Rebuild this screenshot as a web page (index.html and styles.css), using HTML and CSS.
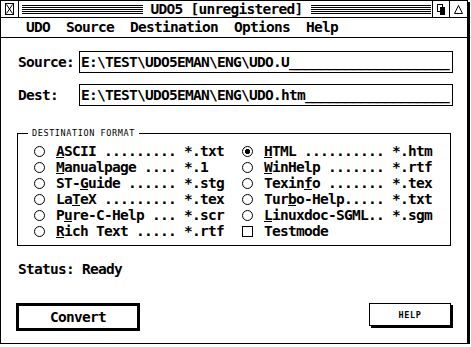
FILE: index.html
```html
<!DOCTYPE html>
<html>
<head>
<meta charset="utf-8">
<link rel="stylesheet" href="styles.css">
</head>
<body>
<div class="window">
  <div class="titlebar">
    <div class="tb-btn close">
      <svg width="9" height="12" viewBox="0 0 9 12"><rect x="0.5" y="0.5" width="8" height="11" fill="none" stroke="#000"/><path d="M1.5 1.5L7.5 10.5M7.5 1.5L1.5 10.5" stroke="#000" fill="none"/></svg>
    </div>
    <div class="drag"><span class="title">UDO5 [unregistered]</span></div>
    <div class="tb-btn full">
      <svg width="8" height="11" viewBox="0 0 8 11"><rect x="0.5" y="0.5" width="5" height="7" fill="none" stroke="#000"/><rect x="3" y="3" width="5" height="8" fill="#000"/></svg>
    </div>
    <div class="tb-btn iconify">
      <svg width="9" height="9" viewBox="0 0 9 9"><path d="M4.5 0.5L8.5 8.5H0.5Z" fill="none" stroke="#000"/></svg>
    </div>
  </div>
  <div class="menubar">
    <span>UDO</span><span>Source</span><span>Destination</span><span>Options</span><span>Help</span>
  </div>
  <div class="content">
    <div class="field">
      <span class="label">Source:</span>
      <div class="input">E:\TEST\UDO5EMAN\ENG\UDO.U<span class="blank">____________________</span></div>
    </div>
    <div class="field">
      <span class="label">Dest:</span>
      <div class="input">E:\TEST\UDO5EMAN\ENG\UDO.htm<span class="blank">__________________</span></div>
    </div>
    <fieldset class="group">
      <legend>DESTINATION FORMAT</legend>
      <div class="grid">
        <div class="opt"><span class="radio"></span><span><u>A</u>SCII ......... *.txt</span></div>
        <div class="opt"><span class="radio"></span><span><u>M</u>anualpage .... *.1</span></div>
        <div class="opt"><span class="radio"></span><span>ST-<u>G</u>uide ...... *.stg</span></div>
        <div class="opt"><span class="radio"></span><span>La<u>T</u>eX ......... *.tex</span></div>
        <div class="opt"><span class="radio"></span><span>P<u>u</u>re-C-Help ... *.scr</span></div>
        <div class="opt"><span class="radio"></span><span><u>R</u>ich Text ..... *.rtf</span></div>
        <div class="opt"><span class="radio on"></span><span><u>H</u>TML .......... *.htm</span></div>
        <div class="opt"><span class="radio"></span><span><u>W</u>inHelp ....... *.rtf</span></div>
        <div class="opt"><span class="radio"></span><span>Texin<u>f</u>o ....... *.tex</span></div>
        <div class="opt"><span class="radio"></span><span>Tur<u>b</u>o-Help..... *.txt</span></div>
        <div class="opt"><span class="radio"></span><span><u>L</u>inuxdoc-SGML.. *.sgm</span></div>
        <div class="opt"><span class="check"></span><span>Testmode</span></div>
      </div>
    </fieldset>
    <div class="status">Status: Ready</div>
    <div class="buttons">
      <button class="btn convert">Convert</button>
      <button class="btn help">HELP</button>
    </div>
  </div>
</div>
</body>
</html>
```
FILE: styles.css
```css
html, body {
  margin: 0;
  background: #fff;
}
body {
  font-family: "DejaVu Sans Mono", "Liberation Mono", monospace;
  font-weight: bold;
  font-size: 14.5px;
  letter-spacing: -0.73px;
  color: #000;
}
.window {
  width: 466px;
  height: 342px;
  border: 1px solid #000;
  box-shadow: 2px 2px 0 #000;
  display: flex;
  flex-direction: column;
}
.titlebar {
  height: 16px;
  border-bottom: 1px solid #000;
  display: flex;
  flex: none;
}
.tb-btn {
  display: flex;
  align-items: center;
  justify-content: center;
}
.tb-btn svg { display: block; }
.close {
  width: 17px;
  border-right: 1px solid #000;
}
.full {
  width: 16px;
  border-left: 1px solid #000;
}
.iconify {
  width: 17px;
  border-left: 1px solid #000;
}
.drag {
  flex: 1;
  padding: 0 1px 0 3px;
  display: flex;
  justify-content: center;
  align-items: center;
  background-image: repeating-linear-gradient(to bottom, #000 0, #000 1px, transparent 1px, transparent 2px);
  background-origin: content-box;
  background-clip: content-box;
  background-size: 100% 9px;
  background-position: 0 4px;
  background-repeat: no-repeat;
}
.title {
  background: #fff;
  padding: 0 8px;
  line-height: 16px;
  white-space: pre;
}
.menubar {
  flex: none;
  height: 19px;
  line-height: 19px;
  border-bottom: 1px solid #000;
  padding-left: 25px;
  display: flex;
  gap: 16px;
}
.content {
  padding: 13px 0 0 16px;
}
.field {
  display: flex;
  align-items: center;
  height: 22px;
}
.field + .field {
  margin-top: 11px;
}
.label {
  width: 61px;
  padding-left: 1px;
}
.input {
  border: 1px solid #000;
  width: 371px;
  height: 20px;
  line-height: 21px;
  padding-left: 1px;
  white-space: pre;
  overflow: hidden;
}
.blank {
  letter-spacing: -0.73px;
}
.group {
  box-sizing: border-box;
  width: 434px;
  margin: 23px 0 0 0;
  border: 1px solid #000;
  padding: 6px 0 6px 16px;
  min-inline-size: 0;
}
.group legend {
  font-family: "DejaVu Sans Mono", monospace;
  font-weight: normal;
  font-size: 8.5px;
  letter-spacing: 0.6px;
  line-height: 8px;
  padding: 0 4px;
  margin-left: -6px;
}
.grid {
  display: grid;
  grid-template-columns: 208px auto;
  grid-template-rows: repeat(6, 16px);
  grid-auto-flow: column;
}
.opt {
  display: flex;
  align-items: center;
  white-space: pre;
  line-height: 16px;
}
.radio {
  width: 11px;
  height: 11px;
  border: 1px solid #000;
  border-radius: 50%;
  box-sizing: border-box;
  margin-right: 11px;
  flex: none;
}
.radio.on {
  background: radial-gradient(circle, #000 0, #000 2.4px, transparent 2.9px);
}
.check {
  width: 11px;
  height: 11px;
  border: 1px solid #000;
  box-sizing: border-box;
  margin-right: 11px;
  flex: none;
}
u {
  text-decoration-thickness: 1px;
  text-underline-offset: 1px;
}
.status {
  margin-top: 15px;
  line-height: 16px;
  padding-left: 1px;
}
.buttons {
  margin-top: 26px;
  margin-left: -1px;
  width: 435px;
  display: flex;
  justify-content: space-between;
  align-items: flex-start;
}
.btn {
  background: #fff;
  color: #000;
  padding: 0;
  box-sizing: border-box;
  font-family: inherit;
  font-weight: bold;
  font-size: 14.5px;
  letter-spacing: -0.73px;
}
.convert {
  width: 124px;
  height: 28px;
  border: 3px solid #000;
}
.help {
  width: 82px;
  height: 23px;
  border: 1px solid #000;
  box-shadow: 2px 2px 0 #000;
  font-weight: bold;
  font-size: 8.5px;
  letter-spacing: 0.6px;
}
```
